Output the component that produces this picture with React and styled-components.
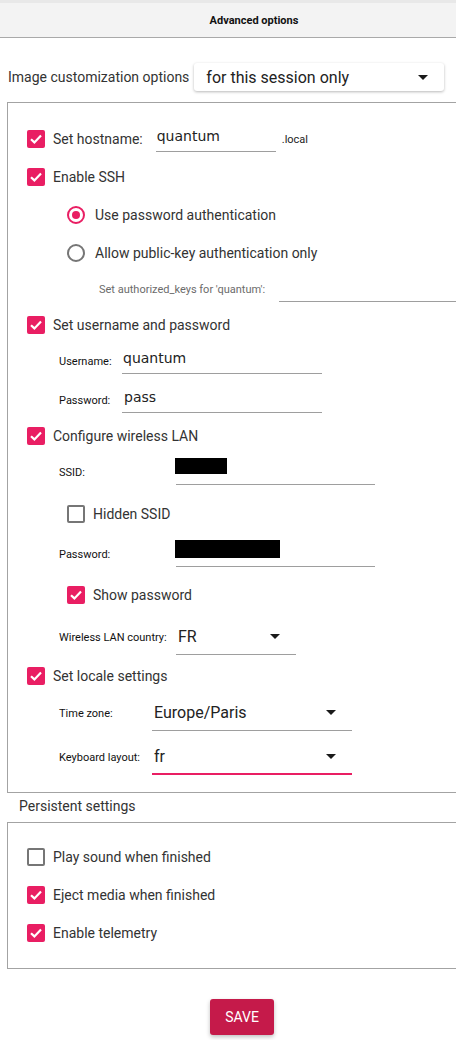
import React from "react";
import styled, { createGlobalStyle } from "styled-components";

const PINK = "#e91e63";

const Global = createGlobalStyle`
  html, body { margin: 0; padding: 0; background: #fff; overflow: hidden; }
  body { font-family: Roboto, "Liberation Sans", sans-serif; color: #333; }
`;

const Dialog = styled.div`
  width: 508px;
  min-height: 1040px;
  background: #fff;
`;

const Header = styled.header`
  height: 34px;
  border-top: 3px solid #e8e8e8;
  border-bottom: 1px solid #a9a9a9;
  background: #f3f3f3;
  display: flex;
  align-items: center;
  justify-content: center;
  font-family: Roboto, sans-serif;
  font-weight: 700;
  font-size: 11px;
  color: #111;
`;

const Content = styled.div`
  margin-left: 7px;
  width: 470px;
  display: flex;
  flex-direction: column;
`;

const TopRow = styled.div`
  margin-top: 25px;
  padding-left: 1px;
  height: 28px;
  display: flex;
  align-items: center;
  gap: 5px;
  font-size: 14px;
  color: #333;
`;

const SelectBox = styled.div`
  width: 250px;
  height: 28px;
  box-sizing: border-box;
  background: #fff;
  border-radius: 3px;
  box-shadow: 0 1px 3px rgba(0, 0, 0, 0.28);
  display: flex;
  align-items: center;
  justify-content: space-between;
  padding: 0 16px 0 12px;
  font-size: 16px;
  color: #222;
`;

const Arrow = styled.span`
  width: 0;
  height: 0;
  border-left: 5px solid transparent;
  border-right: 5px solid transparent;
  border-top: 5px solid #1a1a1a;
`;

const Panel = styled.section`
  border: 1px solid #a3a3a3;
  margin-top: ${(p) => p.$mt || 0}px;
  padding: ${(p) => p.$pt}px 0 ${(p) => p.$pb}px 19px;
  display: flex;
  flex-direction: column;
`;

const Row = styled.div`
  height: ${(p) => p.$h || 38}px;
  padding-left: ${(p) => p.$indent || 0}px;
  display: flex;
  align-items: center;
`;

const Box = styled.span`
  width: 18px;
  height: 18px;
  box-sizing: border-box;
  border-radius: 2px;
  flex: none;
  display: flex;
  align-items: center;
  justify-content: center;
  background: ${(p) => (p.$on ? PINK : "transparent")};
  border: ${(p) => (p.$on ? "none" : "2px solid #767676")};
`;

const CheckText = styled.span`
  margin-left: 8px;
  font-size: 14px;
  color: #333;
  white-space: nowrap;
`;

const Ring = styled.span`
  width: 18px;
  height: 18px;
  box-sizing: border-box;
  border-radius: 50%;
  flex: none;
  border: 2px solid ${(p) => (p.$on ? PINK : "#767676")};
  display: flex;
  align-items: center;
  justify-content: center;
`;

const Dot = styled.span`
  width: 8px;
  height: 8px;
  border-radius: 50%;
  background: ${PINK};
`;

const RadioText = styled.span`
  margin-left: 10px;
  font-size: 14px;
  color: #333;
  white-space: nowrap;
`;

const FieldLabel = styled.span`
  width: ${(p) => p.$w}px;
  flex: none;
  font-size: 11px;
  color: ${(p) => (p.$hint ? "#6b6b6b" : "#111")};
  white-space: nowrap;
`;

const Field = styled.div`
  width: ${(p) => p.$w}px;
  margin-left: ${(p) => p.$ml || 0}px;
  height: 26px;
  box-sizing: border-box;
  flex: none;
  border-bottom: 1px solid #9e9e9e;
  display: flex;
  align-items: ${(p) => (p.$top ? "flex-start" : "center")};
  padding-left: ${(p) => p.$pl ?? 1}px;
  padding-bottom: ${(p) => (p.$top ? 0 : 6)}px;
  font-family: "DejaVu Sans", Verdana, sans-serif;
  font-size: 14px;
  color: #222;
`;

const Redact = styled.span`
  width: ${(p) => p.$w}px;
  height: ${(p) => p.$h}px;
  margin: -1px 0 0 -1px;
  background: #000;
`;

const Suffix = styled.span`
  margin-left: 6px;
  font-size: 11px;
  color: #222;
`;

const Combo = styled.div`
  width: ${(p) => p.$w}px;
  height: 36px;
  box-sizing: border-box;
  flex: none;
  border-bottom: ${(p) => (p.$focus ? `2px solid ${PINK}` : "1px solid #9e9e9e")};
  display: flex;
  align-items: center;
  justify-content: space-between;
  padding: 0 16px 0 2px;
  font-size: 16px;
  color: #222;
`;

const Caption = styled.div`
  padding: 3px 0 6px 12px;
  line-height: 20px;
  font-size: 14px;
  color: #333;
`;

const SaveButton = styled.button`
  align-self: center;
  margin-top: 30px;
  width: 64px;
  height: 36px;
  border: none;
  border-radius: 3px;
  background: #c51a4a;
  color: #fff;
  font-family: Roboto, sans-serif;
  font-size: 14px;
  box-shadow: 0 2px 4px rgba(0, 0, 0, 0.25);
`;

const Tick = () => (
  <svg width="14" height="14" viewBox="0 0 14 14">
    <polyline points="2,7.2 5.4,10.4 12,3.6" fill="none" stroke="#fff" strokeWidth="2.2" />
  </svg>
);

const Check = ({ on, children }) => (
  <>
    <Box $on={on}>{on && <Tick />}</Box>
    <CheckText>{children}</CheckText>
  </>
);

const Radio = ({ on, children }) => (
  <>
    <Ring $on={on}>{on && <Dot />}</Ring>
    <RadioText>{children}</RadioText>
  </>
);

export default function App() {
  return (
    <Dialog>
      <Global />
      <Header>Advanced options</Header>
      <Content>
        <TopRow>
          <span>Image customization options</span>
          <SelectBox>
            <span>for this session only</span>
            <Arrow />
          </SelectBox>
        </TopRow>

        <Panel $mt={11} $pt={17} $pb={11}>
          <Row>
            <Check on>Set hostname:</Check>
            <Field $w={120} $ml={13}>quantum</Field>
            <Suffix>.local</Suffix>
          </Row>
          <Row>
            <Check on>Enable SSH</Check>
          </Row>
          <Row $indent={40}>
            <Radio on>Use password authentication</Radio>
          </Row>
          <Row $indent={40}>
            <Radio>Allow public-key authentication only</Radio>
          </Row>
          <Row $h={34} $indent={72}>
            <FieldLabel $w={180} $hint>Set authorized_keys for 'quantum':</FieldLabel>
            <Field $w={200} />
          </Row>
          <Row>
            <Check on>Set username and password</Check>
          </Row>
          <Row $h={34} $indent={32}>
            <FieldLabel $w={63}>Username:</FieldLabel>
            <Field $w={200}>quantum</Field>
          </Row>
          <Row $h={44} $indent={32}>
            <FieldLabel $w={63}>Password:</FieldLabel>
            <Field $w={200} $pl={2}>pass</Field>
          </Row>
          <Row $h={28}>
            <Check on>Configure wireless LAN</Check>
          </Row>
          <Row $h={44} $indent={32}>
            <FieldLabel $w={117}>SSID:</FieldLabel>
            <Field $w={199} $top $pl={0}>
              <Redact $w={52} $h={16} />
            </Field>
          </Row>
          <Row $h={39} $indent={40}>
            <Check>Hidden SSID</Check>
          </Row>
          <Row $h={42} $indent={32}>
            <FieldLabel $w={117}>Password:</FieldLabel>
            <Field $w={199} $top $pl={0}>
              <Redact $w={105} $h={18} />
            </Field>
          </Row>
          <Row $h={40} $indent={40}>
            <Check on>Show password</Check>
          </Row>
          <Row $h={44} $indent={32}>
            <FieldLabel $w={117}>Wireless LAN country:</FieldLabel>
            <Combo $w={120}>
              <span>FR</span>
              <Arrow />
            </Combo>
          </Row>
          <Row $h={34}>
            <Check on>Set locale settings</Check>
          </Row>
          <Row $h={40} $indent={32}>
            <FieldLabel $w={93}>Time zone:</FieldLabel>
            <Combo $w={200}>
              <span>Europe/Paris</span>
              <Arrow />
            </Combo>
          </Row>
          <Row $h={48} $indent={32}>
            <FieldLabel $w={93}>Keyboard layout:</FieldLabel>
            <Combo $w={200} $focus>
              <span>fr</span>
              <Arrow />
            </Combo>
          </Row>
        </Panel>

        <Caption>Persistent settings</Caption>

        <Panel $pt={15} $pb={16}>
          <Row>
            <Check>Play sound when finished</Check>
          </Row>
          <Row>
            <Check on>Eject media when finished</Check>
          </Row>
          <Row>
            <Check on>Enable telemetry</Check>
          </Row>
        </Panel>

        <SaveButton>SAVE</SaveButton>
      </Content>
    </Dialog>
  );
}
